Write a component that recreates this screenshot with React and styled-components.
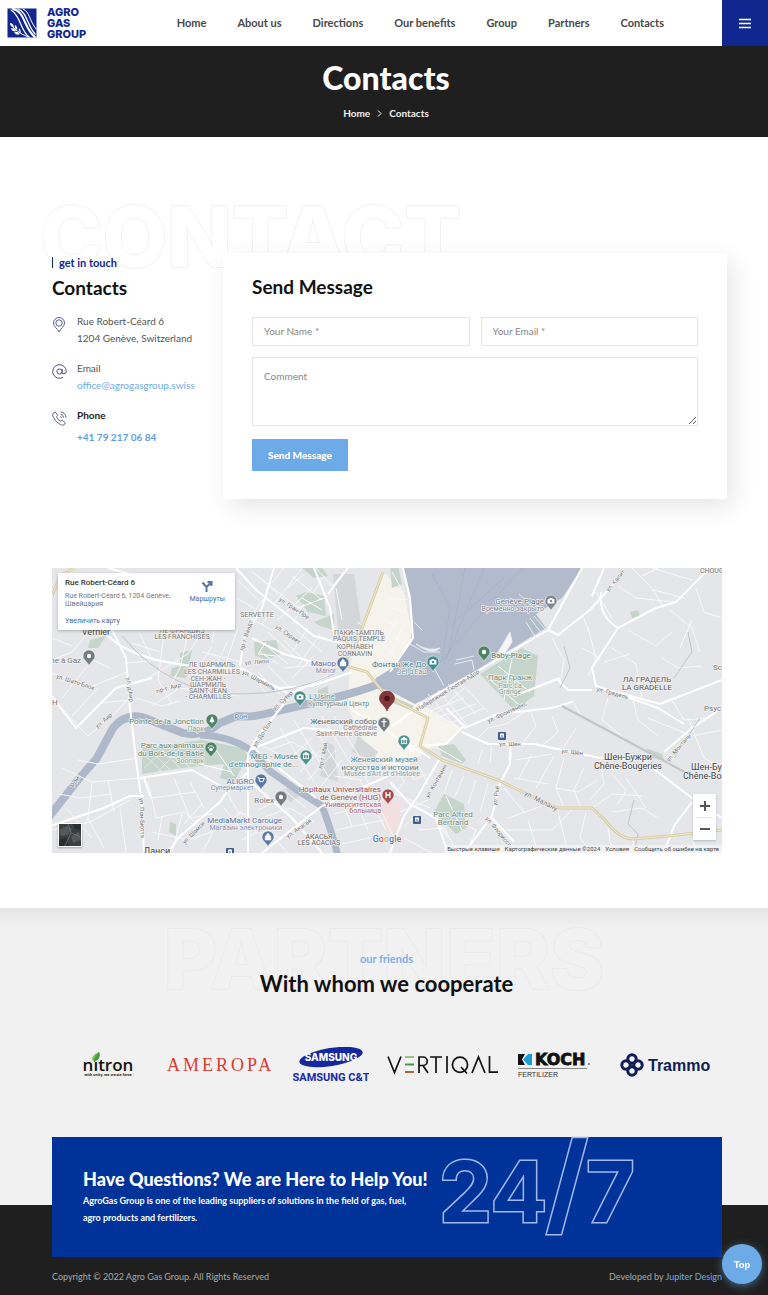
import React from "react";
import styled, { createGlobalStyle } from "styled-components";

const GlobalStyle = createGlobalStyle`
  * {
    box-sizing: border-box;
  }

  body {
    margin: 0;
    background: #fff;
    color: #1f1f1f;
    font-family: Lato, "Open Sans", sans-serif;
    font-size: 10px;
    line-height: 17px;
  }

  h1,
  h2,
  p,
  ul,
  address {
    margin: 0;
    padding: 0;
    font-style: normal;
  }

  a {
    color: inherit;
    text-decoration: none;
  }
`;

const Header = styled.header`
  height: 46px;
  display: flex;
  align-items: center;
  background: #fff;
`;

const Logo = styled.a`
  display: flex;
  align-items: center;
  gap: 10px;
  margin-left: 7px;
  color: #10278f;
`;

const LogoText = styled.span`
  width: 48px;
  font-family: Inter, sans-serif;
  font-size: 11px;
  font-weight: 800;
  line-height: 11px;
`;

const Nav = styled.nav`
  flex: 1;
  display: flex;
  justify-content: flex-end;
  gap: 31px;
  padding: 0 58px 2px 0;
  color: #484848;
  font-size: 11px;
  font-weight: 700;
`;

const MenuButton = styled.button`
  width: 46px;
  height: 46px;
  display: flex;
  align-items: center;
  justify-content: center;
  padding: 0;
  border: 0;
  background: #10278f;
  color: #fff;
`;

const Hero = styled.section`
  height: 91px;
  display: flex;
  flex-direction: column;
  align-items: center;
  gap: 8px;
  padding: 13px 0 0 4px;
  background: #1f1f1f;
  color: #fff;
`;

const HeroTitle = styled.h1`
  font-size: 32px;
  font-weight: 900;
  line-height: 38px;
`;

const Crumbs = styled.nav`
  display: flex;
  align-items: center;
  gap: 7px;
  color: #f0f0f0;
  font-weight: 700;
`;

const Container = styled.div`
  padding: 0 46px 0 52px;
`;

const ContactSection = styled.section`
  padding: 116px 0 55px;
`;

const ContactGrid = styled.div`
  position: relative;
  display: grid;
  grid-template-columns: 171px 1fr;
  margin-right: -5px;
`;

const Ghost = styled.span`
  position: absolute;
  z-index: 0;
  top: ${(props) => props.$top};
  left: ${(props) => props.$left};
  transform: ${(props) => (props.$center ? "translateX(-50%)" : "none")};
  color: ${(props) => props.$fill};
  font-family: Inter, sans-serif;
  font-size: ${(props) => props.$size || "84px"};
  font-weight: ${(props) => props.$weight || 800};
  line-height: 100px;
  white-space: nowrap;
  paint-order: stroke fill;
  -webkit-text-stroke: ${(props) => props.$width || "2px"} ${(props) => props.$stroke};
`;

const Slash = styled.span`
  margin: 0 -2px;
  font-size: 110px;
`;

const Info = styled.div`
  position: relative;
  padding-top: 1px;
`;

const Eyebrow = styled.p`
  display: flex;
  align-items: center;
  gap: 6px;
  color: #10278f;
  font-size: 11px;
  font-weight: 700;

  &::before {
    content: "";
    width: 1px;
    height: 11px;
    background: #10278f;
  }
`;

const Heading = styled.h2`
  color: #111;
  font-size: ${(props) => (props.$large ? "22px" : "19px")};
  font-weight: 700;
  line-height: ${(props) => (props.$large ? "34px" : "24px")};
`;

const InfoHeading = styled(Heading)`
  margin: 5px 0 13px;
`;

const InfoList = styled.ul`
  display: grid;
  gap: 13px;
  list-style: none;
`;

const InfoItem = styled.li`
  display: grid;
  grid-template-columns: 14px 1fr;
  gap: 11px;
  color: #555;

  svg {
    margin-top: 4px;
  }
`;

const MailLink = styled.a`
  display: block;
  color: #6dabe8;
`;

const PhoneLabel = styled.strong`
  display: block;
  margin-bottom: 5px;
  color: #222;
`;

const PhoneLink = styled.a`
  color: #5d9fe2;
  font-weight: 700;
`;

const FormCard = styled.form`
  position: relative;
  padding: 22px 29px 28px;
  border-radius: 3px;
  background: #fff;
  box-shadow: 6px 8px 24px rgba(0, 0, 0, 0.1);
`;

const Fields = styled.div`
  display: grid;
  grid-template-columns: 1fr 1fr;
  gap: 11px;
  margin: 18px 0 13px;
`;

const fieldStyle = `
  width: 100%;
  display: block;
  border: 1px solid #e6e6e6;
  border-radius: 0;
  background: #fff;
  color: #333;
  font: 10px Lato, "Open Sans", sans-serif;
  outline: 0;

  &::placeholder {
    color: #888;
    opacity: 1;
  }
`;

const Input = styled.input`
  ${fieldStyle}
  height: 29px;
  padding: 0 11px 2px;
`;

const TextArea = styled.textarea`
  ${fieldStyle}
  grid-column: 1 / span 2;
  height: 69px;
  padding: 12px 11px;
  resize: vertical;
`;

const SubmitButton = styled.button`
  height: 32px;
  padding: 0 16px;
  border: 0;
  background: #6dabe8;
  color: #fff;
  font: 900 10px Lato, "Open Sans", sans-serif;
`;

const MapFrame = styled.div`
  position: relative;
  height: 285px;
  margin-top: 69px;
  overflow: hidden;
  background: #e8e9ec;
  font-family: Roboto, sans-serif;
`;

const MapSvg = styled.svg`
  width: 100%;
  height: 100%;
  display: block;
`;

const PlaceCard = styled.div`
  position: absolute;
  top: 5px;
  left: 6px;
  width: 177px;
  height: 57px;
  display: flex;
  justify-content: space-between;
  padding: 5px 10px 5px 7px;
  border-radius: 1px;
  background: #fff;
  box-shadow: 0 1px 3px rgba(0, 0, 0, 0.25);
  color: #777;
  font-size: 7px;
  line-height: 8px;

  a {
    color: #456ca8;
  }
`;

const PlaceText = styled.div`
  width: 108px;
`;

const PlaceName = styled.strong`
  display: block;
  margin-bottom: 4px;
  color: #333;
  font-size: 8px;
  font-weight: 500;
  line-height: 10px;
`;

const LargerLink = styled.a`
  display: block;
  margin-top: 9px;
`;

const RouteLink = styled.a`
  display: flex;
  flex-direction: column;
  align-items: center;
  gap: 3px;
  padding-top: 2px;
`;

const ZoomControls = styled.div`
  position: absolute;
  right: 6px;
  bottom: 13px;
  width: 23px;
  display: grid;
  padding: 0 3px;
  background: #fff;
  box-shadow: 0 1px 2px rgba(0, 0, 0, 0.2);
`;

const ZoomButton = styled.button`
  height: 23px;
  display: flex;
  align-items: center;
  justify-content: center;
  padding: 0;
  border: 0;
  background: none;

  & + & {
    border-top: 1px solid #e6e6e6;
  }
`;

const Satellite = styled.button`
  position: absolute;
  left: 6px;
  bottom: 6px;
  width: 24px;
  height: 24px;
  padding: 0;
  border: 1px solid #fff;
  background: #3d4140;
  box-shadow: 0 1px 2px rgba(0, 0, 0, 0.3);
`;

const MapLegal = styled.div`
  position: absolute;
  right: 0;
  bottom: 0;
  display: flex;
  gap: 5px;
  padding: 0 3px;
  background: rgba(245, 245, 245, 0.75);
  color: #444;
  font-size: 6px;
  line-height: 8px;
`;

const Partners = styled.section`
  position: relative;
  height: 297px;
  padding-top: 42px;
  background: linear-gradient(#e5e5e5, #f1f1f1 20px);
  text-align: center;
`;

const PartnersHead = styled.div`
  position: relative;
  z-index: 1;
  padding-left: 5px;
`;

const Friends = styled.p`
  color: #7eb0ea;
  font-size: 11px;
  font-weight: 700;
`;

const LogoRow = styled(Container)`
  display: grid;
  grid-template-columns: repeat(6, 1fr);
  align-items: center;
  justify-items: center;
  margin-top: 46px;
`;

const Footer = styled.footer`
  padding-bottom: 10px;
  background: #1f1f1f;
  color: #aaa;
`;

const FooterInner = styled(Container)`
  position: relative;
`;

const FooterPull = styled.div`
  margin-top: -68px;
`;

const Help = styled.section`
  position: relative;
  height: 120px;
  padding: 30px 31px;
  background: #003399;
  color: #fff;
`;

const HelpTitle = styled.h2`
  position: relative;
  font-size: 18px;
  font-weight: 900;
  line-height: 25px;
`;

const HelpText = styled.p`
  position: relative;
  width: 336px;
  font-size: 9px;
  font-weight: 700;
`;

const Copyright = styled.div`
  display: flex;
  justify-content: space-between;
  padding-top: 11px;
  font-size: 9px;

  a {
    color: #6dabe8;
  }
`;

const TopButton = styled.button`
  position: fixed;
  right: 6px;
  bottom: 11px;
  width: 40px;
  height: 40px;
  padding: 0;
  border: 0;
  border-radius: 50%;
  background: #6dabe8;
  box-shadow: 0 2px 8px rgba(109, 171, 232, 0.5);
  color: #fff;
  font: 900 10px Lato, "Open Sans", sans-serif;
`;

const navItems = [
  "Home",
  "About us",
  "Directions",
  "Our benefits",
  "Group",
  "Partners",
  "Contacts",
];

const minorRoads = [
  "M0 92 L20 84 38 62 M0 105 L40 118 66 108 M14 145 L36 168 62 146 79 128 M0 70 L20 78 M10 130 L40 92 58 100 M20 148 L46 120",
  "M88 66 L100 92 152 99 M80 75 L108 84 M96 110 L136 86 150 64 M100 138 L128 120 188 128 M74 95 L98 93 M112 66 L106 112 120 136 M136 66 L128 100 118 118",
  "M60 110 L75 104 M48 135 L78 132 M84 130 L110 138 128 133 M160 78 L150 94 140 118 M176 72 L160 108 M165 45 L160 75 M186 60 L172 100 M150 84 L190 94",
  "M186 12 L206 32 M184 30 L202 40 M200 4 L252 44 M206 8 L226 26 M232 0 L214 22 M250 0 L222 36 M260 20 L226 52 M240 8 L270 32 M212 30 L198 50 220 62 M220 44 L210 56 M252 36 L240 56 M216 64 L244 90 M210 74 L236 96 M208 84 L226 96",
  "M264 0 L280 18 292 4 M272 8 L262 24 M284 20 L290 52 M236 20 L252 6 M244 62 L270 84 M232 72 L256 96 M256 60 L240 84 M268 66 L246 98 M262 88 L240 110 M272 96 L232 100 M206 104 L228 126 M216 98 L240 122 M196 102 L216 128",
  "M305 54 L318 62 M296 62 L312 80 M334 52 L350 62 M330 60 L352 76 M338 40 L356 44 M336 30 L356 32 M326 72 L344 90 M320 82 L336 100 M344 52 L332 78 M354 52 L338 86 M340 4 L350 22",
  "M96 214 L104 250 132 244 150 260 M122 210 L138 250 160 246 M98 230 L144 224 M110 248 L106 272 M130 246 L120 284 M150 236 L132 256 M100 264 L136 272 160 264 M138 214 L152 240",
  "M10 200 L40 214 88 210 M6 226 L30 230 60 226 M0 262 L38 254 78 232 M40 214 L36 250 30 262 M56 212 L62 244 M68 240 L74 284 M36 250 L52 280 M14 240 L40 270 M26 192 L46 196 86 190",
  "M150 285 L162 262 190 244 M172 240 L190 262 M176 226 L186 244 204 250 M200 262 L230 270 M206 242 L226 232 M210 250 L238 240 262 254 M214 262 L236 285 M190 272 L220 256 M232 222 L254 240 M222 226 L240 250",
  "M200 172 L230 188 M216 182 L240 174 270 190 M232 196 L260 170 M248 204 L272 178 M256 212 L284 182 M266 222 L290 192 M228 160 L262 214 M242 152 L276 208 M256 150 L290 204 M270 148 L300 198 M282 148 L312 196",
  "M282 208 L310 212 M286 222 L300 258 M296 214 L316 262 M308 212 L334 262 M280 232 L318 222 M282 246 L330 234 M284 262 L332 252 M290 276 L326 268 M312 206 L342 270",
  "M340 190 L352 214 342 226 M352 192 L362 212 376 206 M344 226 L378 240 M348 244 L376 232 M352 258 L366 246 M366 196 L376 216 M372 184 L360 194",
  "M376 126 L408 164 M386 122 L416 158 M396 116 L424 146 M366 136 L394 128 M370 146 L412 130 M378 152 L424 136 M388 160 L432 140 M406 112 L436 144 M412 120 L384 146",
  "M424 172 L436 160 454 156 476 142 M430 182 L426 196 M440 178 L438 194 M458 178 L460 190 M470 176 L484 158 478 142 M490 178 L506 164 500 148 M510 182 L524 160 M464 192 L500 186 M466 212 L480 186 M484 220 L502 188 M462 210 L496 216",
  "M512 190 L504 220 512 240 M532 200 L522 222 528 238 M504 220 L526 224 546 212 M548 192 L552 216 538 232 M560 206 L574 222 566 236 M540 240 L560 226 590 228 M574 210 L594 240",
  "M400 202 L392 226 M412 208 L402 230 M424 212 L416 236 M436 216 L428 244 M452 220 L472 244 M456 250 L490 238 M450 262 L500 262 520 242 M476 252 L486 285 M506 244 L516 285 M534 244 L528 270 540 285 M556 260 L560 285",
  "M366 262 L392 260 406 285 M380 244 L396 270 M352 270 L380 285 M412 256 L424 262 414 285 M440 250 L464 285 M560 244 L590 240 606 250 M580 270 L584 285 M640 270 L644 285",
  "M536 60 L544 90 536 108 M544 24 L560 50 M530 46 L538 66 M530 80 L548 90 M500 70 L512 92 508 116 M560 80 L584 96 590 130 M552 94 L578 86",
  "M580 0 L600 20 612 40 M590 8 L606 0 M602 22 L632 30 M566 18 L584 30 622 34 M600 0 L640 12 M618 42 L640 60 648 84 M644 20 L652 44 670 50 M576 62 L604 78 620 64 M640 52 L628 80",
  "M610 90 L626 100 650 98 M620 132 L632 152 658 150 M580 128 L586 152 606 168 M556 130 L550 152 572 170 M520 132 L530 150 M596 150 L640 168 670 162 M636 150 L652 190 670 200",
];

const mainRoads = [
  "M52 64 Q84 100 190 101 L226 120",
  "M56 0 L100 12 160 8 M58 58 L74 90 78 140 85 200 90 236 92 285",
  "M0 128 L24 160 64 120 100 110",
  "M-2 258 L52 240 78 228 92 228 M88 210 L140 202 176 222 168 234 126 270 116 285 M92 210 L98 228",
  "M184 0 L204 22 262 68 300 78 M222 0 L210 40 192 70 188 98",
  "M262 0 L278 40 282 66 330 62 M296 0 L276 26 M200 70 L232 86 276 98",
  "M226 120 L260 118 300 104 M188 100 L238 126 276 108",
  "M232 136 L206 168 196 186 196 214 196 285 M196 204 L176 224",
  "M196 212 L240 250 270 285 M270 238 L234 266 210 285 M270 238 L292 228 340 206",
  "M198 182 L252 160 300 164 M204 182 L264 230 M300 142 L332 160 362 184",
  "M351 0 L358 30 361 70 338 104",
  "M340 158 L382 128 424 104 496 62 530 0",
  "M496 62 L506 67 538 42 572 4 M552 0 L540 28",
  "M549 24 Q546 48 566 60 L604 40 624 34 658 0 M566 60 L540 100 544 118 606 140 632 156 M506 112 L516 122 540 122 M462 128 L508 110",
  "M544 118 L556 122 608 136 670 112",
  "M410 164 L436 176 482 176 548 190 590 192 640 230 670 250",
  "M394 140 L412 158 394 176 368 178 M412 160 L446 146 500 140 520 134",
  "M458 176 L458 196 448 216 440 248 412 285 M388 190 L366 228 352 248 338 285",
  "M352 174 L378 190 M338 214 L358 236 384 250 396 285 M440 250 L462 274",
  "M640 234 L622 258 612 285 M612 184 L640 160 670 140",
];

const busRoads =
  "M331 4 L315 47 305 74 291 97 315 104 331 124 346 134 376 150 368 178 390 192 446 212 473 225 506 240 540 240 553 252 Q566 270 580 271 L616 268 670 262 M0 28 L8 8 22 0";

function Pin({ x, y, color, glyph, large }) {
  return (
    <g transform={`translate(${x} ${y}) scale(${large ? 1.25 : 1})`}>
      <path
        d="M0 8 C-1 4 -6 2 -6 -2 A6 6 0 0 1 6 -2 C6 2 1 4 0 8Z"
        fill={color}
        stroke={large ? "#6d2328" : "#fff"}
        strokeWidth="0.5"
      />
      {glyph === "dot" && <circle cx="0" cy="-2" r="2.2" fill="#fff" />}
      {glyph === "dark" && <circle cx="0" cy="-2" r="2.2" fill="#4c1517" />}
      {glyph === "camera" && (
        <g>
          <path d="M-3.4 -4 h1.6 l.8 -1 h2 l.8 1 h1.6 v4.4 h-6.8z" fill="#fff" />
          <circle cx="0" cy="-2" r="1.2" fill={color} />
        </g>
      )}
      {glyph === "bag" && (
        <path
          d="M-2.8 -3 h5.6 v4 h-5.6z M-1.4 -3 v-1 a1.4 1.4 0 0 1 2.8 0 v1"
          fill="#fff"
          stroke="#fff"
          strokeWidth="0.6"
        />
      )}
      {glyph === "cart" && (
        <path
          d="M-3.5 -4.5 h1.2 l1 4 h3.4 l1.2 -3 h-5 M-1 1 h.2 M2 1 h.2"
          fill="none"
          stroke="#fff"
          strokeWidth="1"
        />
      )}
      {glyph === "cross" && (
        <path d="M0 -6 v8 M-2.4 -3.4 h4.8" stroke="#fff" strokeWidth="1.2" />
      )}
      {glyph === "hospital" && (
        <path
          d="M-1.9 -5 v6 M1.9 -5 v6 M-1.9 -2 h3.8"
          stroke="#fff"
          strokeWidth="1.3"
        />
      )}
      {glyph === "museum" && (
        <path
          d="M-3.2 -3.6 L0 -5.6 3.2 -3.6z M-2.4 -3 v3 M0 -3 v3 M2.4 -3 v3 M-3.2 .6 h6.4"
          fill="#fff"
          stroke="#fff"
          strokeWidth="0.9"
        />
      )}
      {glyph === "tree" && (
        <path d="M0 -6 L2.6 0 H.5 V1.6 H-.5 V0 H-2.6z" fill="#fff" />
      )}
      {glyph === "paw" && (
        <g fill="#fff">
          <ellipse cx="0" cy="-0.6" rx="1.9" ry="1.5" />
          <circle cx="-2.6" cy="-2.4" r="0.8" />
          <circle cx="-0.9" cy="-4" r="0.8" />
          <circle cx="0.9" cy="-4" r="0.8" />
          <circle cx="2.6" cy="-2.4" r="0.8" />
        </g>
      )}
    </g>
  );
}

const pins = [
  { x: 37, y: 90, color: "#757a80", glyph: "dot" },
  { x: 291, y: 97, color: "#5a76a3", glyph: "bag" },
  { x: 381, y: 96, color: "#3f8e94", glyph: "camera" },
  { x: 248, y: 131, color: "#4b8f8c", glyph: "camera" },
  { x: 499, y: 35, color: "#808790", glyph: "camera" },
  { x: 432, y: 86, color: "#4d8465", glyph: "dot" },
  { x: 160, y: 154, color: "#4d8465", glyph: "tree" },
  { x: 159, y: 182, color: "#4d8465", glyph: "paw" },
  { x: 254, y: 190, color: "#4b8f8c", glyph: "museum" },
  { x: 209, y: 214, color: "#5a76a3", glyph: "cart" },
  { x: 229, y: 231, color: "#757a80", glyph: "dot" },
  { x: 216, y: 271, color: "#5a76a3", glyph: "bag" },
  { x: 332, y: 157, color: "#757a80", glyph: "cross" },
  { x: 352, y: 175, color: "#4b8f8c", glyph: "museum" },
  { x: 336, y: 229, color: "#a14b50", glyph: "hospital" },
];

// [text, x, y, size, color, anchor, rotation]
const labels = [
  ["Vernier", 44, 67, 9, "#444", "middle"],
  ["LES FRANCHISES", 130, 71, 7, "#777", "middle"],
  ["ЛЕ ФРАНШИЗ", 130, 65, 7, "#777", "middle"],
  ["SERVETTE", 205, 49, 7, "#777", "middle"],
  ["ПАКИ-ТАМПЛЬ", 307, 67, 7, "#777", "middle"],
  ["PÂQUIS TEMPLE", 307, 73, 7, "#777", "middle"],
  ["КОРНАВЕН", 303, 81, 7, "#777", "middle"],
  ["CORNAVIN", 303, 88, 7, "#777", "middle"],
  ["ЛЕ ШАРМИЛЬ", 160, 99, 7, "#777", "middle"],
  ["LES CHARMILLES", 160, 106, 7, "#777", "middle"],
  ["СЕН-ЖАН -", 156, 113, 7, "#777", "middle"],
  ["ШАРМИЛЬ", 156, 119, 7, "#777", "middle"],
  ["SAINT-JEAN", 156, 125, 7, "#777", "middle"],
  ["- CHARMILLES", 156, 131, 7, "#777", "middle"],
  ["ne à Gaz", 29, 95, 8, "#777", "end"],
  ["Н", 0, 137, 8, "#777", "start"],
  ["ул. Шато-Блок", 23, 116, 6, "#777", "middle", 18],
  ["пр-т. Аир", 117, 122, 6, "#777", "middle", -15],
  ["ул. Гран-Пре", 241, 42, 6, "#777", "middle", 33],
  ["ул. Сервет", 235, 68, 6, "#777", "middle", 35],
  ["пр-т. Вандт", 196, 68, 6, "#777", "middle", -72],
  ["ул. Лион", 205, 96, 6, "#777", "middle", -5],
  ["ул. Шармиль", 206, 114, 6, "#777", "middle", 28],
  ["ул. Сутер", 232, 134, 6, "#777", "middle", -42],
  ["ул. д’Аир", 76, 122, 6, "#777", "middle", 82],
  ["ул. Пон-Бюттэ", 88, 250, 6, "#777", "middle", 88],
  ["ул. Шамси", 143, 266, 6, "#777", "middle", -45],
  ["ул. Акасья", 248, 262, 6, "#777", "middle", -35],
  ["ул. До-Пон", 212, 167, 6, "#777", "middle", -57],
  ["ул. Аир", 53, 154, 6, "#777", "middle", -40],
  ["Рон", 189, 151, 7, "#5f7391", "middle", -4],
  ["Рон", 25, 215, 7, "#5f7391", "middle", -60],
  ["пр-т. Май", 273, 188, 6, "#777", "middle", -78],
  ["L'Usine", 257, 131, 8, "#5b9393", "start"],
  ["Культурный Центр", 256, 138, 7, "#5b9393", "start"],
  ["Манор", 284, 98, 8, "#5a76a3", "end"],
  ["Manor", 284, 105, 7, "#7d92b3", "end"],
  ["Фонтан Же До", 374, 99, 8, "#3f7f86", "end"],
  ["Jet d'Eau", 374, 106, 7, "#6d9ba5", "end"],
  ["Genève-Plage", 492, 36, 8, "#6e7683", "end"],
  ["Временно закрыто", 492, 43, 7, "#7e8693", "end"],
  ["Baby-Plage", 439, 90, 8, "#4d8465", "start"],
  ["Парк Гранж", 458, 112, 8, "#6b8f79", "middle"],
  ["Parc La", 458, 120, 7, "#7fa38d", "middle"],
  ["Grange", 458, 126, 7, "#7fa38d", "middle"],
  ["Набережная Гюстав-Адор", 397, 124, 6, "#777", "middle", -32],
  ["ЛА ГРАДЕЛЬ", 595, 114, 8, "#555", "middle"],
  ["LA GRADELLE", 595, 122, 8, "#555", "middle"],
  ["ул. Градель", 560, 127, 6, "#777", "middle", 15],
  ["ул. Капит", 565, 14, 6, "#777", "middle", -50],
  ["CHOUG", 648, 5, 7, "#777", "start"],
  ["Sc", 661, 102, 8, "#777", "start"],
  ["Psyc", 652, 143, 8, "#777", "start"],
  ["Pointe de la Jonction", 152, 156, 8, "#5b8a70", "end"],
  ["Парк", 152, 163, 7, "#7fa38d", "end"],
  ["Parc aux animaux", 152, 180, 8, "#5b8a70", "end"],
  ["du Bois-de-la-Bâtie", 152, 188, 8, "#5b8a70", "end"],
  ["Зоопарк", 152, 195, 7, "#7fa38d", "end"],
  ["MEG - Musée", 246, 191, 8, "#4e8589", "end"],
  ["d'ethnographie de...", 246, 199, 8, "#4e8589", "end"],
  ["ALIGRO", 202, 216, 8, "#5a76a3", "end"],
  ["Супермаркет", 202, 222, 7, "#7d92b3", "end"],
  ["Rolex", 222, 235, 8, "#777", "end"],
  ["MediaMarkt Carouge", 230, 255, 8, "#5a76a3", "end"],
  ["Магазин электроники", 230, 262, 7, "#7d92b3", "end"],
  ["Женевский собор", 325, 156, 8, "#666", "end"],
  ["Cathédrale", 325, 162, 7, "#888", "end"],
  ["Saint-Pierre Genève", 325, 168, 7, "#888", "end"],
  ["Женевский музей", 332, 194, 8, "#5c868b", "middle"],
  ["искусства и истории", 328, 202, 8, "#5c868b", "middle"],
  ["Musée d'Art et d'Histoire", 330, 208, 7, "#7b9fa4", "middle"],
  ["Hôpitaux Universitaires", 329, 224, 8, "#a14b50", "end"],
  ["de Genève (HUG)", 329, 232, 8, "#a14b50", "end"],
  ["Университетская", 329, 239, 7, "#b0666a", "end"],
  ["больница", 329, 245, 7, "#b0666a", "end"],
  ["АКАСЬЯ", 267, 271, 7, "#666", "middle"],
  ["LES ACACIAS", 267, 277, 7, "#666", "middle"],
  ["Ланси", 105, 286, 9, "#444", "middle"],
  ["ул. Фронтенекс", 456, 146, 6, "#777", "middle", -25],
  ["ул. Шен", 458, 178, 6, "#777", "middle"],
  ["ул. Шен", 520, 186, 6, "#777", "middle", 7],
  ["Шен-Бужри", 576, 192, 9, "#444", "middle"],
  ["Chêne-Bougeries", 576, 201, 9, "#444", "middle"],
  ["Шен-Бужри", 639, 202, 9, "#444", "start"],
  ["Chêne-Bougeries", 631, 211, 9, "#444", "start"],
  ["ул. Монтань", 628, 181, 6, "#777", "middle", -50],
  ["ул. Малану", 488, 235, 7, "#777", "middle", 27],
  ["ул. Контамин", 386, 214, 6, "#777", "middle", -60],
  ["ул. Рьё", 446, 228, 6, "#777", "middle", -82],
  ["ул. Флорисса", 445, 265, 6, "#777", "middle", 50],
  ["Parc Alfred", 401, 249, 8, "#6b8f79", "middle"],
  ["Bertrand", 401, 257, 8, "#6b8f79", "middle"],
];

function CityMap() {
  return (
    <MapSvg viewBox="0 0 670 285" preserveAspectRatio="xMidYMid slice">
      <rect width="670" height="285" fill="#e5e6e9" />
      <path
        d="M331 4 L352 24 361 70 336 104 376 140 410 160 392 178 372 182 352 202 330 196 310 170 296 140 298 96 316 48z"
        fill="#f5f3ec"
      />
      <path d="M326 232 L350 234 348 268 334 262z" fill="#f2dfdf" />
      <g fill="#c5d5cb">
        <path d="M202 74 L224 72 228 86 216 92 203 88z" />
        <path d="M244 28 L254 24 272 28 274 48 256 44z" />
        <path d="M262 54 L282 46 282 62 268 58z" />
        <path d="M250 0 L270 0 276 8 262 10z M128 85 L140 82 134 110 118 108 120 100 128 98z" />
        <path d="M38 72 L54 68 46 80 36 80z" />
        <path d="M90 180 L150 172 190 180 196 188 182 214 168 210 172 196 130 200 90 206z" />
        <path d="M428 106 L470 80 486 88 482 128 462 142z" />
        <path d="M386 178 L402 176 414 192 410 196 390 188z" />
        <path d="M392 226 L412 236 414 260 404 266 382 244z" />
        <path d="M331 124 L362 138 358 142 334 132z M266 122 L276 118 276 128 266 128z" />
        <path d="M338 -2 L346 -2 350 16 340 20z M578 44 L586 42 588 48 580 50z" />
        <path d="M594 180 L610 186 612 192 600 190z M118 254 L124 256 124 268 117 264z" />
      </g>
      <g fill="#d4d6d9">
        <path d="M281 6 L302 6 310 62 286 62z M276 174 L282 178 286 214 268 208z M306 168 L326 184 320 192 300 184z M230 222 L240 218 248 228 238 234z" />
      </g>
      <path
        d="M351 0 L358 30 361 57 359 72 340 100 324 110 318 120 336 122 363 136 378 128 423 103 494 60 484 46 500 36 510 30 530 0z"
        fill="#b1bbcc"
      />
      <g fill="none" stroke="#adb8ca" strokeWidth="7">
        <path
          d="M330 115 Q306 124 285 129 T221 144 Q200 150 185 148 L168 155 Q150 170 131 165 L98 152 Q76 142 61 160 L45 190 25 213 -4 250"
          strokeWidth="8"
        />
        <path d="M148 167 Q178 168 198 182 L218 203 245 222 270 238 Q278 258 286 288" />
      </g>
      <g fill="none" stroke="#f9f9fa" strokeWidth="1">
        {minorRoads.map((d) => (
          <path key={d} d={d} />
        ))}
      </g>
      <g fill="none" stroke="#fff" strokeWidth="2" strokeLinejoin="round">
        {mainRoads.map((d) => (
          <path key={d} d={d} />
        ))}
      </g>
      <g fill="none" stroke="#c2c4c8" strokeWidth="1">
        <path d="M70 68 Q120 128 190 126 Q240 126 282 106" />
        <path d="M510 138 L566 168 640 208" strokeWidth="2" />
        <path d="M636 64 L640 84 622 110 M648 150 L622 190 M582 232 L576 256 586 266 582 285 M512 78 L518 100 508 120" />
      </g>
      <g fill="none" stroke="#9ba7bb" strokeWidth="0.5" strokeDasharray="2 1">
        <path d="M413 0 L396 88 M432 0 L392 96 M470 0 L440 34 388 94 M452 10 L396 60 M350 108 Q380 104 396 88 M380 6 L398 40 390 92" />
      </g>
      <g fill="none" stroke="#e8ecf2" strokeWidth="1">
        <path d="M358 76 L372 84 388 84 M362 54 L370 62 M403 96 L420 92 422 102 M404 92 L422 88 M474 54 L484 70 M478 50 L490 66 M482 48 L494 62 M382 100 L392 118 M467 26 L484 42" />
        <path d="M445 86 L458 64 460 74 450 90z" fill="#f5f5f6" />
        <path d="M364 76 Q376 84 388 80 Q380 88 364 76z" fill="#f5f5f6" />
      </g>
      <g fill="none" stroke="#fff" strokeWidth="1">
        <path d="M434 108 L466 136 M446 98 L478 124 M460 90 L452 132 M386 180 L410 194 M394 228 L410 262 M214 74 L206 86 224 88 M250 30 L270 42 M246 40 L272 30 M100 184 L180 204 M160 176 L182 208" />
        <path
          d="M92 186 L110 204 M100 184 L118 202 M110 182 L128 200 M120 180 L138 200 M92 200 L112 182 M106 204 L128 180"
          stroke="#dfe8e2"
        />
      </g>
      <g fill="none" strokeLinejoin="round">
        <path d={busRoads} stroke="#d9cda6" strokeWidth="3" />
        <path d={busRoads} stroke="#f1ead0" strokeWidth="1" />
      </g>
      <g
        fontFamily="Roboto, sans-serif"
        stroke="#f3f3f4"
        strokeWidth="1.4"
        strokeLinejoin="round"
        paintOrder="stroke"
      >
        {labels.map(([text, x, y, size, color, anchor, rotation]) => (
          <text
            key={`${text}${x}${y}`}
            x={x}
            y={y}
            fontSize={size}
            fill={color}
            textAnchor={anchor}
            transform={rotation ? `rotate(${rotation} ${x} ${y})` : undefined}
          >
            {text}
          </text>
        ))}
        <text x="335" y="274" fontSize="9" fontWeight="500" textAnchor="middle">
          <tspan fill="#5a7fc0">G</tspan>
          <tspan fill="#c0605a">o</tspan>
          <tspan fill="#cfae55">o</tspan>
          <tspan fill="#5a7fc0">g</tspan>
          <tspan fill="#5c9a70">l</tspan>
          <tspan fill="#c0605a">e</tspan>
        </text>
      </g>
      {[
        [450, 168],
        [365, 252],
        [178, 284],
      ].map(([x, y]) => (
        <g key={x} transform={`translate(${x} ${y})`}>
          <rect x="-4" y="-4" width="8" height="8" rx="1" fill="#3f5f94" />
          <rect x="-2" y="-2.5" width="4" height="4" rx="0.5" fill="#fff" />
          <path d="M-1.2 0 h2.4" stroke="#3f5f94" />
        </g>
      ))}
      {pins.map((pin) => (
        <Pin key={`${pin.x}-${pin.y}`} {...pin} />
      ))}
      <Pin x={335} y={133} color="#82373a" glyph="dark" large />
    </MapSvg>
  );
}

function SiteLogo() {
  return (
    <svg width="30" height="30" viewBox="0 0 30 30" aria-hidden="true">
      <rect x="0.5" y="0.5" width="29" height="29" fill="#10278f" />
      <g fill="none" stroke="#fff" strokeLinecap="round">
        <path d="M6 1 C18 3 17 21 28 29" strokeWidth="2" />
        <path d="M11 1 C20 4 20 17 28 26" strokeWidth="1.3" />
        <path d="M16 1 C23 4 22 12 29 21" strokeWidth="1" />
        <path d="M4 2 C14 8 13 22 22 29" strokeWidth="1.2" />
        <path d="M4 17 C8 21 12 26 22 29" strokeWidth="1" />
      </g>
      <g fill="#fff">
        <path d="M3 15 q3 0 4 4 q-4 0 -4 -4z M8 17 q3 2 2 5 q-3 -2 -2 -5z M12 20 q2 2 2 5 q-3 -2 -2 -5z M4 20 q4 0 5 3 q-4 1 -5 -3z M7 24 q4 -1 6 2 q-4 2 -6 -2z" />
      </g>
    </svg>
  );
}

function PlaceIcon() {
  return (
    <svg width="14" height="16" viewBox="0 0 14 16" fill="none" stroke="#5a5f9c">
      <path d="M7 15 C5 11 1.5 9.500 1.500 6 A5.500 5.500 0 0 1 12.500 6 C12.500 9.500 9 11 7 15Z" />
      <circle cx="7" cy="6" r="3.200" />
    </svg>
  );
}

function MailIcon() {
  return (
    <svg width="15" height="15" viewBox="0 0 15 15" fill="none" stroke="#4a5090">
      <circle cx="7.500" cy="7.500" r="2.600" />
      <path d="M10.100 5 V8.300 Q10.100 10 12 9.800 Q14.300 9.300 14.300 7.300 A6.800 6.800 0 1 0 11 13.300" />
    </svg>
  );
}

function PhoneIcon() {
  return (
    <svg width="15" height="15" viewBox="0 0 15 15" fill="none" stroke="#5f648f">
      <path d="M1.500 1.800 L3.300 1 5.700 4.300 4.500 5.800 Q5.800 8.800 8.700 10.300 L10.300 9.200 13.300 11.800 12.500 13.500 Q11 14.800 8.600 13.700 Q2.800 10.800 0.800 5 Q0.400 3 1.500 1.800Z" />
      <path d="M8.500 3.200 Q11.400 3.800 11.700 6.700 M8.500 0.800 Q13.500 1.500 14.100 6.700 M8.300 5.500 Q9.400 5.800 9.500 7" />
    </svg>
  );
}

function PartnerLogos() {
  return (
    <LogoRow>
      <svg width="52" height="28" viewBox="0 0 52 28" role="img" aria-label="nitron">
        <text x="26" y="20" fontFamily="Open Sans" fontSize="17" fontWeight="600" fill="#111" textAnchor="middle">
          nıtron
        </text>
        <path d="M12 11 C8 7 11 4 17 1 C19 6 16 9 12 11z" fill="#6cc24f" />
        <path d="M12 11 C12 7 14 4 17 1 C19 6 16 9 12 11z" fill="#3f9c45" />
        <text x="26" y="25" fontFamily="Lato" fontSize="4" fontWeight="900" fill="#222" textAnchor="middle">
          with unity, we create force
        </text>
      </svg>
      <svg width="108" height="20" viewBox="0 0 108 20" role="img" aria-label="Ameropa">
        <text x="2" y="16" fontFamily="Liberation Serif" fontSize="18" letterSpacing="3" fill="#dd3a30">
          AMEROPA
        </text>
      </svg>
      <svg width="76" height="36" viewBox="0 0 76 36" role="img" aria-label="Samsung C&T">
        <ellipse cx="38" cy="10" rx="32" ry="9" fill="#1428a0" transform="rotate(-9 38 10)" />
        <text x="38" y="14" fontFamily="Inter" fontSize="10" fontWeight="800" fill="#fff" textAnchor="middle">
          SAMSUNG
        </text>
        <text x="38" y="34" fontFamily="Roboto" fontSize="11" fontWeight="700" fill="#1a28ab" textAnchor="middle">
          SAMSUNG C&amp;T
        </text>
      </svg>
      <svg width="112" height="20" viewBox="0 0 112 20" fill="none" stroke="#111" strokeWidth="1.700" role="img" aria-label="Vertiqal">
        <path d="M1 1.500 L7.500 17.500 14 1.500" />
        <path d="M18 2 h9" stroke="#95c47d" strokeWidth="2" />
        <path d="M18 9.500 h9" stroke="#3c9a4c" strokeWidth="2" />
        <path d="M18 17 h9" stroke="#b5603c" strokeWidth="2" />
        <path d="M32 18 V2 h4 a4 4 0 0 1 0 8.500 h-4 M36 10.500 L41 18 M43 2 h12 M49 2 v16 M60 1 v17" />
        <circle cx="73" cy="9.800" r="7.600" />
        <path d="M74 12 L80 18.500 M85 18 L91.500 2 98 18 M102.500 1 V17.200 h8.500" />
      </svg>
      <svg width="76" height="28" viewBox="0 0 76 28" role="img" aria-label="Koch Fertilizer">
        <path d="M1 3 h7 l-3 5.500 3 5.500 h-7z" fill="#111" />
        <path d="M15 3 v11 h-4 l-5 -5.500 5 -5.500z" fill="#1b9ed8" />
        <text x="18" y="14" fontFamily="DejaVu Sans" fontSize="16" fontWeight="700" fill="#111" stroke="#111" strokeWidth="0.800">
          KOCH
        </text>
        <circle cx="72" cy="13" r="0.800" fill="#111" />
        <path d="M1 17.500 h69" stroke="#888" />
        <text x="1" y="26" fontFamily="Liberation Sans" fontSize="7" fill="#333">
          FERTILIZER
        </text>
      </svg>
      <svg width="92" height="26" viewBox="0 0 92 26" role="img" aria-label="Trammo">
        <g fill="none" stroke="#101d55" strokeWidth="3">
          <circle cx="12" cy="7" r="4.200" />
          <circle cx="12" cy="19" r="4.200" />
          <circle cx="6" cy="13" r="4.200" />
          <circle cx="18" cy="13" r="4.200" />
        </g>
        <text x="28" y="19" fontFamily="Liberation Sans" fontSize="16" fontWeight="700" fill="#101d55">
          Trammo
        </text>
      </svg>
    </LogoRow>
  );
}

function App() {
  return (
    <>
      <GlobalStyle />
      <Header>
        <Logo href="#home">
          <SiteLogo />
          <LogoText>AGRO GAS GROUP</LogoText>
        </Logo>
        <Nav>
          {navItems.map((item) => (
            <a key={item} href="#page">
              {item}
            </a>
          ))}
        </Nav>
        <MenuButton aria-label="Menu">
          <svg width="12" height="11" viewBox="0 0 12 11" stroke="currentColor" strokeWidth="1.500">
            <path d="M0 1.500 h12 M0 5.500 h12 M0 9.500 h12" />
          </svg>
        </MenuButton>
      </Header>

      <Hero>
        <HeroTitle>Contacts</HeroTitle>
        <Crumbs>
          <a href="#home">Home</a>
          <svg width="5" height="7" viewBox="0 0 5 7" fill="none" stroke="#fff">
            <path d="M1 0.500 L4 3.500 1 6.500" />
          </svg>
          <span>Contacts</span>
        </Crumbs>
      </Hero>

      <ContactSection>
        <Container>
          <ContactGrid>
            <Ghost $top="-66px" $left="-12px" $fill="#fff" $stroke="#f2f2f2">
              CONTACT
            </Ghost>
            <Info>
              <Eyebrow>get in touch</Eyebrow>
              <InfoHeading>Contacts</InfoHeading>
              <InfoList>
                <InfoItem>
                  <PlaceIcon />
                  <address>
                    Rue Robert-Céard 6<br />
                    1204 Genève, Switzerland
                  </address>
                </InfoItem>
                <InfoItem>
                  <MailIcon />
                  <div>
                    Email
                    <MailLink href="#mail">office@agrogasgroup.swiss</MailLink>
                  </div>
                </InfoItem>
                <InfoItem>
                  <PhoneIcon />
                  <div>
                    <PhoneLabel>Phone</PhoneLabel>
                    <PhoneLink href="#phone">+41 79 217 06 84</PhoneLink>
                  </div>
                </InfoItem>
              </InfoList>
            </Info>
            <FormCard onSubmit={(event) => event.preventDefault()}>
              <Heading>Send Message</Heading>
              <Fields>
                <Input aria-label="Your Name" placeholder="Your Name *" />
                <Input type="email" aria-label="Your Email" placeholder="Your Email *" />
                <TextArea aria-label="Comment" placeholder="Comment" />
              </Fields>
              <SubmitButton>Send Message</SubmitButton>
            </FormCard>
          </ContactGrid>

          <MapFrame>
            <CityMap />
            <PlaceCard>
              <PlaceText>
                <PlaceName>Rue Robert-Céard 6</PlaceName>
                Rue Robert-Céard 6, 1204 Genève, Швейцария
                <LargerLink href="#map">Увеличить карту</LargerLink>
              </PlaceText>
              <RouteLink href="#route">
                <svg width="12" height="12" viewBox="0 0 12 12" fill="none" stroke="#54799f" strokeWidth="2">
                  <path d="M5.500 12 V7 L10 2.500 M6.500 2 H10.500 V6 M5 6.500 L1.500 2.500" />
                </svg>
                Маршруты
              </RouteLink>
            </PlaceCard>
            <Satellite aria-label="Satellite">
              <svg width="22" height="22" viewBox="0 0 22 22">
                <rect width="22" height="22" fill="#3b3f3e" />
                <path d="M0 6 L8 2 13 5 9 11 2 12z M12 12 L20 8 22 16 14 19z" fill="#54585a" />
                <path d="M0 16 L7 13 10 22 H0z M14 0 H22 V6 L16 5z" fill="#2b2f2e" />
                <path d="M9 0 L12 9 6 22 M12 9 L22 13" fill="none" stroke="#777b7b" strokeWidth="0.700" />
              </svg>
            </Satellite>
            <ZoomControls>
              <ZoomButton aria-label="Zoom in">
                <svg width="10" height="10" viewBox="0 0 10 10" stroke="#555" strokeWidth="2">
                  <path d="M5 0 v10 M0 5 h10" />
                </svg>
              </ZoomButton>
              <ZoomButton aria-label="Zoom out">
                <svg width="10" height="10" viewBox="0 0 10 10" stroke="#555" strokeWidth="2">
                  <path d="M0 5 h10" />
                </svg>
              </ZoomButton>
            </ZoomControls>
            <MapLegal>
              <span>Быстрые клавиши</span>
              <span>Картографические данные ©2024</span>
              <span>Условия</span>
              <span>Сообщить об ошибке на карте</span>
            </MapLegal>
          </MapFrame>
        </Container>
      </ContactSection>

      <Partners>
        <Ghost $top="2px" $left="50%" $center $size="82px" $fill="#f1f1f1" $stroke="#eaeaea">
          PARTNERS
        </Ghost>
        <PartnersHead>
          <Friends>our friends</Friends>
          <Heading $large>With whom we cooperate</Heading>
        </PartnersHead>
        <PartnerLogos />
      </Partners>

      <Footer>
        <FooterInner>
          <FooterPull>
            <Help>
              <Ghost
                $top="-5px"
                $left="387px"
                $size="84px"
                $weight={700}
                $width="3px"
                $fill="#003399"
                $stroke="#a3b7ea"
              >
                24<Slash>/</Slash>7
              </Ghost>
              <HelpTitle>Have Questions? We are Here to Help You!</HelpTitle>
              <HelpText>
                AgroGas Group is one of the leading suppliers of solutions in the
                field of gas, fuel, agro products and fertilizers.
              </HelpText>
            </Help>
          </FooterPull>
          <Copyright>
            <span>Copyright © 2022 Agro Gas Group. All Rights Reserved</span>
            <span>
              Developed by <a href="#studio">Jupiter Design</a>
            </span>
          </Copyright>
        </FooterInner>
      </Footer>
      <TopButton>Top</TopButton>
    </>
  );
}

export default App;
